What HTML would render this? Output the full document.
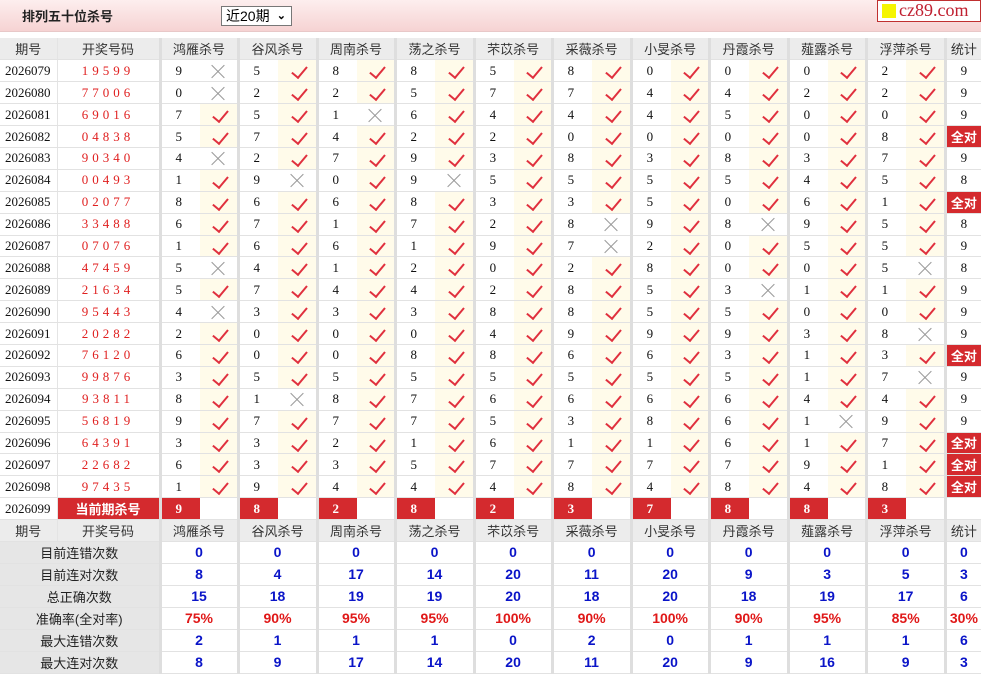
<!DOCTYPE html>
<html><head><meta charset="utf-8">
<style>
*{margin:0;padding:0;box-sizing:border-box}
body{width:981px;height:675px;overflow:hidden;background:#fff;font-family:"Liberation Sans","Noto Sans CJK SC",sans-serif}
.top{position:absolute;left:0;top:0;width:981px;height:32px;background:linear-gradient(#fdeeee,#f6d3d3);border-bottom:1px solid #e8c8c8}
.ttl{position:absolute;left:22px;top:6px;font-size:13px;font-weight:bold;color:#222}
.sel{position:absolute;left:221px;top:6px;width:71px;height:20px;border:1px solid #777;background:#fff;font-size:14px;padding-left:4px;line-height:18px;color:#000}
.sel b{position:absolute;right:5px;top:0;font-size:11px}
.logo{position:absolute;left:877px;top:0;width:104px;height:22px;border:1px solid #c03030;background:#fff;font-family:"Liberation Serif",serif;color:#c02030;font-size:18px;line-height:19px;padding-left:21px}
.logo i{position:absolute;left:4px;top:3px;width:14px;height:14px;background:#f5f500}
table{position:absolute;left:0;top:38px;width:981px;border-collapse:collapse;table-layout:fixed}
td{height:21.9px;border-bottom:1px solid #e2e2e2;text-align:center;font-size:13px;color:#111;padding:0;white-space:nowrap;overflow:hidden}
.h td{background:#ececec;color:#333}
.q{font-family:"Liberation Serif",serif;text-align:left;padding-left:5px;background:#fff}
.h .q,.s .q{text-align:center;padding:0}
.k{font-family:"Liberation Serif",serif;color:#e02020;letter-spacing:4px;border-left:1px solid #e4e4e4}
.n{font-family:"Liberation Serif",serif;text-align:left;padding-left:14px;border-left:3px solid #dedede}
.h .n,.s .n{text-align:center;padding:0}
.v{background:#fffbea;position:relative}
.v::after{content:"";position:absolute;left:50%;top:3px;width:7px;height:13px;margin-left:-2px;border-right:2px solid #e0303e;border-bottom:2px solid #e0303e;transform:rotate(40deg)}
.x{position:relative}
.x::before,.x::after{content:"";position:absolute;left:50%;top:50%;width:18px;height:1px;margin-left:-9px;background:#999;transform:rotate(45deg)}
.x::after{transform:rotate(-45deg)}
.t{border-left:3px solid #dedede;font-family:"Liberation Serif",serif}
.a{background:#d42a2e;color:#fff!important;font-weight:bold;font-family:"Liberation Sans","Noto Sans CJK SC",sans-serif;font-size:13px}
.cur .n{background:#d42a2e;color:#fff;font-weight:bold}
.cur .k{background:#d42a2e;color:#fff;font-weight:bold;letter-spacing:0;font-family:"Liberation Sans","Noto Sans CJK SC",sans-serif}
.s td{height:22px;font-weight:bold;color:#0a14c8;font-size:14px}
.s td.l{background:#e6e6e6;color:#222;font-weight:normal;font-size:13px}
.s td.p{color:#e01818}
.s .n{font-family:"Liberation Sans",sans-serif}
</style></head><body>
<div class="top"><div class="ttl">排列五十位杀号</div><div class="sel">近20期<b>&#x2304;</b></div><div class="logo"><i></i>cz89.com</div></div>
<table>
<colgroup><col style="width:57px"><col style="width:103px">
<col style="width:40px"><col style="width:38px"><col style="width:40px"><col style="width:39px"><col style="width:40px"><col style="width:38px"><col style="width:40px"><col style="width:39px"><col style="width:40px"><col style="width:38px"><col style="width:40px"><col style="width:39px"><col style="width:40px"><col style="width:38px"><col style="width:40px"><col style="width:39px"><col style="width:40px"><col style="width:38px"><col style="width:40px"><col style="width:39px">
<col style="width:36px"></colgroup>
<tr class="h"><td class="q">期号</td><td class="k" style="letter-spacing:0;color:#333;font-family:'Liberation Sans','Noto Sans CJK SC',sans-serif">开奖号码</td><td class="n" colspan="2">鸿雁杀号</td><td class="n" colspan="2">谷风杀号</td><td class="n" colspan="2">周南杀号</td><td class="n" colspan="2">荡之杀号</td><td class="n" colspan="2">芣苡杀号</td><td class="n" colspan="2">采薇杀号</td><td class="n" colspan="2">小旻杀号</td><td class="n" colspan="2">丹霞杀号</td><td class="n" colspan="2">薤露杀号</td><td class="n" colspan="2">浮萍杀号</td><td class="t" style="font-family:'Liberation Sans','Noto Sans CJK SC',sans-serif">统计</td></tr>
<tr><td class="q">2026079</td><td class="k">19599</td><td class="n">9</td><td class="x"></td><td class="n">5</td><td class="v"></td><td class="n">8</td><td class="v"></td><td class="n">8</td><td class="v"></td><td class="n">5</td><td class="v"></td><td class="n">8</td><td class="v"></td><td class="n">0</td><td class="v"></td><td class="n">0</td><td class="v"></td><td class="n">0</td><td class="v"></td><td class="n">2</td><td class="v"></td><td class="t">9</td></tr>
<tr><td class="q">2026080</td><td class="k">77006</td><td class="n">0</td><td class="x"></td><td class="n">2</td><td class="v"></td><td class="n">2</td><td class="v"></td><td class="n">5</td><td class="v"></td><td class="n">7</td><td class="v"></td><td class="n">7</td><td class="v"></td><td class="n">4</td><td class="v"></td><td class="n">4</td><td class="v"></td><td class="n">2</td><td class="v"></td><td class="n">2</td><td class="v"></td><td class="t">9</td></tr>
<tr><td class="q">2026081</td><td class="k">69016</td><td class="n">7</td><td class="v"></td><td class="n">5</td><td class="v"></td><td class="n">1</td><td class="x"></td><td class="n">6</td><td class="v"></td><td class="n">4</td><td class="v"></td><td class="n">4</td><td class="v"></td><td class="n">4</td><td class="v"></td><td class="n">5</td><td class="v"></td><td class="n">0</td><td class="v"></td><td class="n">0</td><td class="v"></td><td class="t">9</td></tr>
<tr><td class="q">2026082</td><td class="k">04838</td><td class="n">5</td><td class="v"></td><td class="n">7</td><td class="v"></td><td class="n">4</td><td class="v"></td><td class="n">2</td><td class="v"></td><td class="n">2</td><td class="v"></td><td class="n">0</td><td class="v"></td><td class="n">0</td><td class="v"></td><td class="n">0</td><td class="v"></td><td class="n">0</td><td class="v"></td><td class="n">8</td><td class="v"></td><td class="t a">全对</td></tr>
<tr><td class="q">2026083</td><td class="k">90340</td><td class="n">4</td><td class="x"></td><td class="n">2</td><td class="v"></td><td class="n">7</td><td class="v"></td><td class="n">9</td><td class="v"></td><td class="n">3</td><td class="v"></td><td class="n">8</td><td class="v"></td><td class="n">3</td><td class="v"></td><td class="n">8</td><td class="v"></td><td class="n">3</td><td class="v"></td><td class="n">7</td><td class="v"></td><td class="t">9</td></tr>
<tr><td class="q">2026084</td><td class="k">00493</td><td class="n">1</td><td class="v"></td><td class="n">9</td><td class="x"></td><td class="n">0</td><td class="v"></td><td class="n">9</td><td class="x"></td><td class="n">5</td><td class="v"></td><td class="n">5</td><td class="v"></td><td class="n">5</td><td class="v"></td><td class="n">5</td><td class="v"></td><td class="n">4</td><td class="v"></td><td class="n">5</td><td class="v"></td><td class="t">8</td></tr>
<tr><td class="q">2026085</td><td class="k">02077</td><td class="n">8</td><td class="v"></td><td class="n">6</td><td class="v"></td><td class="n">6</td><td class="v"></td><td class="n">8</td><td class="v"></td><td class="n">3</td><td class="v"></td><td class="n">3</td><td class="v"></td><td class="n">5</td><td class="v"></td><td class="n">0</td><td class="v"></td><td class="n">6</td><td class="v"></td><td class="n">1</td><td class="v"></td><td class="t a">全对</td></tr>
<tr><td class="q">2026086</td><td class="k">33488</td><td class="n">6</td><td class="v"></td><td class="n">7</td><td class="v"></td><td class="n">1</td><td class="v"></td><td class="n">7</td><td class="v"></td><td class="n">2</td><td class="v"></td><td class="n">8</td><td class="x"></td><td class="n">9</td><td class="v"></td><td class="n">8</td><td class="x"></td><td class="n">9</td><td class="v"></td><td class="n">5</td><td class="v"></td><td class="t">8</td></tr>
<tr><td class="q">2026087</td><td class="k">07076</td><td class="n">1</td><td class="v"></td><td class="n">6</td><td class="v"></td><td class="n">6</td><td class="v"></td><td class="n">1</td><td class="v"></td><td class="n">9</td><td class="v"></td><td class="n">7</td><td class="x"></td><td class="n">2</td><td class="v"></td><td class="n">0</td><td class="v"></td><td class="n">5</td><td class="v"></td><td class="n">5</td><td class="v"></td><td class="t">9</td></tr>
<tr><td class="q">2026088</td><td class="k">47459</td><td class="n">5</td><td class="x"></td><td class="n">4</td><td class="v"></td><td class="n">1</td><td class="v"></td><td class="n">2</td><td class="v"></td><td class="n">0</td><td class="v"></td><td class="n">2</td><td class="v"></td><td class="n">8</td><td class="v"></td><td class="n">0</td><td class="v"></td><td class="n">0</td><td class="v"></td><td class="n">5</td><td class="x"></td><td class="t">8</td></tr>
<tr><td class="q">2026089</td><td class="k">21634</td><td class="n">5</td><td class="v"></td><td class="n">7</td><td class="v"></td><td class="n">4</td><td class="v"></td><td class="n">4</td><td class="v"></td><td class="n">2</td><td class="v"></td><td class="n">8</td><td class="v"></td><td class="n">5</td><td class="v"></td><td class="n">3</td><td class="x"></td><td class="n">1</td><td class="v"></td><td class="n">1</td><td class="v"></td><td class="t">9</td></tr>
<tr><td class="q">2026090</td><td class="k">95443</td><td class="n">4</td><td class="x"></td><td class="n">3</td><td class="v"></td><td class="n">3</td><td class="v"></td><td class="n">3</td><td class="v"></td><td class="n">8</td><td class="v"></td><td class="n">8</td><td class="v"></td><td class="n">5</td><td class="v"></td><td class="n">5</td><td class="v"></td><td class="n">0</td><td class="v"></td><td class="n">0</td><td class="v"></td><td class="t">9</td></tr>
<tr><td class="q">2026091</td><td class="k">20282</td><td class="n">2</td><td class="v"></td><td class="n">0</td><td class="v"></td><td class="n">0</td><td class="v"></td><td class="n">0</td><td class="v"></td><td class="n">4</td><td class="v"></td><td class="n">9</td><td class="v"></td><td class="n">9</td><td class="v"></td><td class="n">9</td><td class="v"></td><td class="n">3</td><td class="v"></td><td class="n">8</td><td class="x"></td><td class="t">9</td></tr>
<tr><td class="q">2026092</td><td class="k">76120</td><td class="n">6</td><td class="v"></td><td class="n">0</td><td class="v"></td><td class="n">0</td><td class="v"></td><td class="n">8</td><td class="v"></td><td class="n">8</td><td class="v"></td><td class="n">6</td><td class="v"></td><td class="n">6</td><td class="v"></td><td class="n">3</td><td class="v"></td><td class="n">1</td><td class="v"></td><td class="n">3</td><td class="v"></td><td class="t a">全对</td></tr>
<tr><td class="q">2026093</td><td class="k">99876</td><td class="n">3</td><td class="v"></td><td class="n">5</td><td class="v"></td><td class="n">5</td><td class="v"></td><td class="n">5</td><td class="v"></td><td class="n">5</td><td class="v"></td><td class="n">5</td><td class="v"></td><td class="n">5</td><td class="v"></td><td class="n">5</td><td class="v"></td><td class="n">1</td><td class="v"></td><td class="n">7</td><td class="x"></td><td class="t">9</td></tr>
<tr><td class="q">2026094</td><td class="k">93811</td><td class="n">8</td><td class="v"></td><td class="n">1</td><td class="x"></td><td class="n">8</td><td class="v"></td><td class="n">7</td><td class="v"></td><td class="n">6</td><td class="v"></td><td class="n">6</td><td class="v"></td><td class="n">6</td><td class="v"></td><td class="n">6</td><td class="v"></td><td class="n">4</td><td class="v"></td><td class="n">4</td><td class="v"></td><td class="t">9</td></tr>
<tr><td class="q">2026095</td><td class="k">56819</td><td class="n">9</td><td class="v"></td><td class="n">7</td><td class="v"></td><td class="n">7</td><td class="v"></td><td class="n">7</td><td class="v"></td><td class="n">5</td><td class="v"></td><td class="n">3</td><td class="v"></td><td class="n">8</td><td class="v"></td><td class="n">6</td><td class="v"></td><td class="n">1</td><td class="x"></td><td class="n">9</td><td class="v"></td><td class="t">9</td></tr>
<tr><td class="q">2026096</td><td class="k">64391</td><td class="n">3</td><td class="v"></td><td class="n">3</td><td class="v"></td><td class="n">2</td><td class="v"></td><td class="n">1</td><td class="v"></td><td class="n">6</td><td class="v"></td><td class="n">1</td><td class="v"></td><td class="n">1</td><td class="v"></td><td class="n">6</td><td class="v"></td><td class="n">1</td><td class="v"></td><td class="n">7</td><td class="v"></td><td class="t a">全对</td></tr>
<tr><td class="q">2026097</td><td class="k">22682</td><td class="n">6</td><td class="v"></td><td class="n">3</td><td class="v"></td><td class="n">3</td><td class="v"></td><td class="n">5</td><td class="v"></td><td class="n">7</td><td class="v"></td><td class="n">7</td><td class="v"></td><td class="n">7</td><td class="v"></td><td class="n">7</td><td class="v"></td><td class="n">9</td><td class="v"></td><td class="n">1</td><td class="v"></td><td class="t a">全对</td></tr>
<tr><td class="q">2026098</td><td class="k">97435</td><td class="n">1</td><td class="v"></td><td class="n">9</td><td class="v"></td><td class="n">4</td><td class="v"></td><td class="n">4</td><td class="v"></td><td class="n">4</td><td class="v"></td><td class="n">8</td><td class="v"></td><td class="n">4</td><td class="v"></td><td class="n">8</td><td class="v"></td><td class="n">4</td><td class="v"></td><td class="n">8</td><td class="v"></td><td class="t a">全对</td></tr>
<tr class="cur"><td class="q">2026099</td><td class="k">当前期杀号</td><td class="n">9</td><td></td><td class="n">8</td><td></td><td class="n">2</td><td></td><td class="n">8</td><td></td><td class="n">2</td><td></td><td class="n">3</td><td></td><td class="n">7</td><td></td><td class="n">8</td><td></td><td class="n">8</td><td></td><td class="n">3</td><td></td><td class="t"></td></tr>
<tr class="h"><td class="q">期号</td><td class="k" style="letter-spacing:0;color:#333;font-family:'Liberation Sans','Noto Sans CJK SC',sans-serif">开奖号码</td><td class="n" colspan="2">鸿雁杀号</td><td class="n" colspan="2">谷风杀号</td><td class="n" colspan="2">周南杀号</td><td class="n" colspan="2">荡之杀号</td><td class="n" colspan="2">芣苡杀号</td><td class="n" colspan="2">采薇杀号</td><td class="n" colspan="2">小旻杀号</td><td class="n" colspan="2">丹霞杀号</td><td class="n" colspan="2">薤露杀号</td><td class="n" colspan="2">浮萍杀号</td><td class="t" style="font-family:'Liberation Sans','Noto Sans CJK SC',sans-serif">统计</td></tr>
<tr class="s"><td class="l" colspan="2">目前连错次数</td><td class="n" colspan="2">0</td><td class="n" colspan="2">0</td><td class="n" colspan="2">0</td><td class="n" colspan="2">0</td><td class="n" colspan="2">0</td><td class="n" colspan="2">0</td><td class="n" colspan="2">0</td><td class="n" colspan="2">0</td><td class="n" colspan="2">0</td><td class="n" colspan="2">0</td><td class="t" style="font-family:'Liberation Sans',sans-serif">0</td></tr>
<tr class="s"><td class="l" colspan="2">目前连对次数</td><td class="n" colspan="2">8</td><td class="n" colspan="2">4</td><td class="n" colspan="2">17</td><td class="n" colspan="2">14</td><td class="n" colspan="2">20</td><td class="n" colspan="2">11</td><td class="n" colspan="2">20</td><td class="n" colspan="2">9</td><td class="n" colspan="2">3</td><td class="n" colspan="2">5</td><td class="t" style="font-family:'Liberation Sans',sans-serif">3</td></tr>
<tr class="s"><td class="l" colspan="2">总正确次数</td><td class="n" colspan="2">15</td><td class="n" colspan="2">18</td><td class="n" colspan="2">19</td><td class="n" colspan="2">19</td><td class="n" colspan="2">20</td><td class="n" colspan="2">18</td><td class="n" colspan="2">20</td><td class="n" colspan="2">18</td><td class="n" colspan="2">19</td><td class="n" colspan="2">17</td><td class="t" style="font-family:'Liberation Sans',sans-serif">6</td></tr>
<tr class="s"><td class="l" colspan="2">准确率(全对率)</td><td class="n p" colspan="2">75%</td><td class="n p" colspan="2">90%</td><td class="n p" colspan="2">95%</td><td class="n p" colspan="2">95%</td><td class="n p" colspan="2">100%</td><td class="n p" colspan="2">90%</td><td class="n p" colspan="2">100%</td><td class="n p" colspan="2">90%</td><td class="n p" colspan="2">95%</td><td class="n p" colspan="2">85%</td><td class="t p" style="font-family:'Liberation Sans',sans-serif">30%</td></tr>
<tr class="s"><td class="l" colspan="2">最大连错次数</td><td class="n" colspan="2">2</td><td class="n" colspan="2">1</td><td class="n" colspan="2">1</td><td class="n" colspan="2">1</td><td class="n" colspan="2">0</td><td class="n" colspan="2">2</td><td class="n" colspan="2">0</td><td class="n" colspan="2">1</td><td class="n" colspan="2">1</td><td class="n" colspan="2">1</td><td class="t" style="font-family:'Liberation Sans',sans-serif">6</td></tr>
<tr class="s"><td class="l" colspan="2">最大连对次数</td><td class="n" colspan="2">8</td><td class="n" colspan="2">9</td><td class="n" colspan="2">17</td><td class="n" colspan="2">14</td><td class="n" colspan="2">20</td><td class="n" colspan="2">11</td><td class="n" colspan="2">20</td><td class="n" colspan="2">9</td><td class="n" colspan="2">16</td><td class="n" colspan="2">9</td><td class="t" style="font-family:'Liberation Sans',sans-serif">3</td></tr>
</table>
</body></html>
